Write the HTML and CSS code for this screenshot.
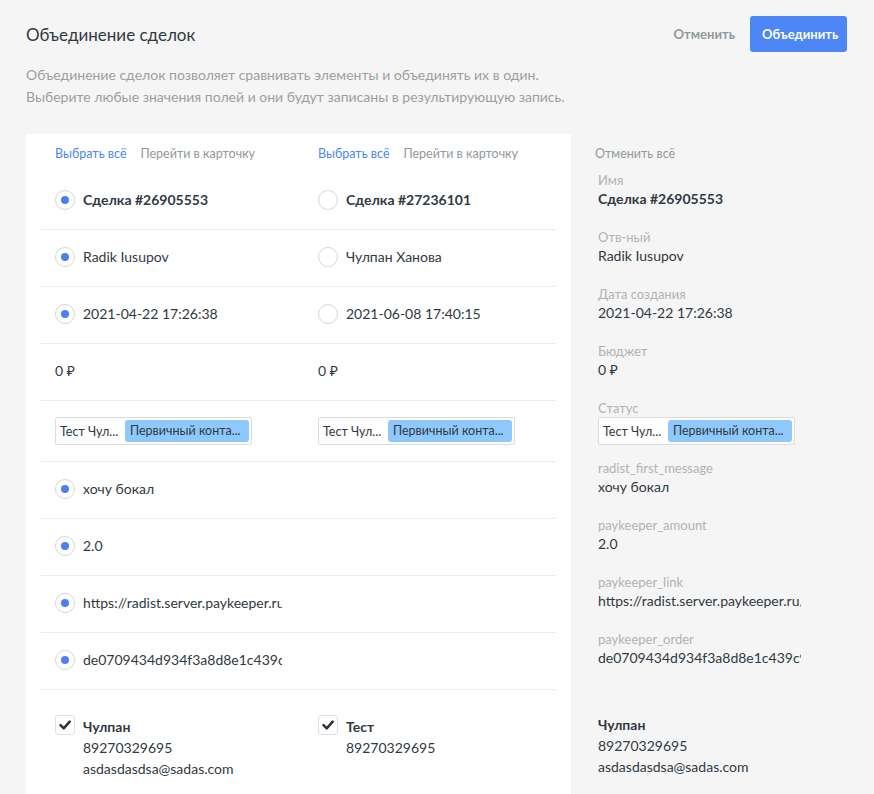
FILE: index.html
```html
<!DOCTYPE html>
<html lang="ru">
<head>
    <meta charset="UTF-8">
    <meta name="viewport" content="width=device-width, initial-scale=1.0">
    <title>Объединение сделок</title>
    <link rel="stylesheet" href="styles.css">
</head>
<body>

<div class="page">
    <header class="top">
        <h1 class="title">Объединение сделок</h1>
        <div class="actions">
            <button class="btn-cancel">Отменить</button>
            <button class="btn-merge">Объединить</button>
        </div>
    </header>

    <p class="intro">Объединение сделок позволяет сравнивать элементы и объединять их в один.<br>Выберите любые значения полей и они будут записаны в результирующую запись.</p>

    <div class="merge">
        <div class="compare">
            <div class="row links">
                <div class="cell"><a class="select-all">Выбрать всё</a><a class="open-card">Перейти в карточку</a></div>
                <div class="cell"><a class="select-all">Выбрать всё</a><a class="open-card">Перейти в карточку</a></div>
            </div>

            <div class="row">
                <div class="cell"><span class="radio on"></span><span class="val bold">Сделка #26905553</span></div>
                <div class="cell"><span class="radio"></span><span class="val bold">Сделка #27236101</span></div>
            </div>
            <div class="row">
                <div class="cell"><span class="radio on"></span><span class="val">Radik Iusupov</span></div>
                <div class="cell"><span class="radio"></span><span class="val">Чулпан Ханова</span></div>
            </div>
            <div class="row">
                <div class="cell"><span class="radio on"></span><span class="val">2021-04-22 17:26:38</span></div>
                <div class="cell"><span class="radio"></span><span class="val">2021-06-08 17:40:15</span></div>
            </div>
            <div class="row">
                <div class="cell"><span class="val">0 ₽</span></div>
                <div class="cell"><span class="val">0 ₽</span></div>
            </div>
            <div class="row row-status">
                <div class="cell">
                    <div class="status"><span class="pipeline">Тест Чул...</span><span class="stage">Первичный конта...</span></div>
                </div>
                <div class="cell">
                    <div class="status"><span class="pipeline">Тест Чул...</span><span class="stage">Первичный конта...</span></div>
                </div>
            </div>
            <div class="row">
                <div class="cell"><span class="radio on"></span><span class="val">хочу бокал</span></div>
                <div class="cell"></div>
            </div>
            <div class="row">
                <div class="cell"><span class="radio on"></span><span class="val">2.0</span></div>
                <div class="cell"></div>
            </div>
            <div class="row">
                <div class="cell"><span class="radio on"></span><span class="val">https://radist.server.paykeeper.ru/bill/1234567890/</span></div>
                <div class="cell"></div>
            </div>
            <div class="row">
                <div class="cell"><span class="radio on"></span><span class="val">de0709434d934f3a8d8e1c439c9a1b2e</span></div>
                <div class="cell"></div>
            </div>

            <div class="row contacts">
                <div class="cell">
                    <span class="check"><svg viewBox="0 0 20 20" width="20" height="20"><path d="M5 10.2 L8.6 13.8 L15.2 6.2" fill="none" stroke="#2b323b" stroke-width="2.8" stroke-linecap="round" stroke-linejoin="round"/></svg></span>
                    <div class="contact">
                        <div class="bold">Чулпан</div>
                        <div>89270329695</div>
                        <div>asdasdasdsa@sadas.com</div>
                    </div>
                </div>
                <div class="cell">
                    <span class="check"><svg viewBox="0 0 20 20" width="20" height="20"><path d="M5 10.2 L8.6 13.8 L15.2 6.2" fill="none" stroke="#2b323b" stroke-width="2.8" stroke-linecap="round" stroke-linejoin="round"/></svg></span>
                    <div class="contact">
                        <div class="bold">Тест</div>
                        <div>89270329695</div>
                    </div>
                </div>
            </div>
        </div>

        <aside class="result">
            <a class="reset">Отменить всё</a>
            <div class="field">
                <div class="label">Имя</div>
                <div class="value bold">Сделка #26905553</div>
            </div>
            <div class="field">
                <div class="label">Отв-ный</div>
                <div class="value">Radik Iusupov</div>
            </div>
            <div class="field">
                <div class="label">Дата создания</div>
                <div class="value">2021-04-22 17:26:38</div>
            </div>
            <div class="field">
                <div class="label">Бюджет</div>
                <div class="value">0 ₽</div>
            </div>
            <div class="field field-status">
                <div class="label">Статус</div>
                <div class="status"><span class="pipeline">Тест Чул...</span><span class="stage">Первичный конта...</span></div>
            </div>
            <div class="field">
                <div class="label">radist_first_message</div>
                <div class="value">хочу бокал</div>
            </div>
            <div class="field">
                <div class="label">paykeeper_amount</div>
                <div class="value">2.0</div>
            </div>
            <div class="field">
                <div class="label">paykeeper_link</div>
                <div class="value">https://radist.server.paykeeper.ru/bill/1234567890/</div>
            </div>
            <div class="field">
                <div class="label">paykeeper_order</div>
                <div class="value">de0709434d934f3a8d8e1c439c9a1b2e</div>
            </div>
            <div class="contact result-contact">
                <div class="bold">Чулпан</div>
                <div>89270329695</div>
                <div>asdasdasdsa@sadas.com</div>
            </div>
        </aside>
    </div>
</div>

</body>
</html>
```

FILE: styles.css
```css
body {
    margin: 0;
    background-color: #f5f5f5;
    font-family: "Lato", "Noto Sans", sans-serif;
    font-size: 14px;
    color: #313942;
}
.page {
    padding: 16px 27px 0 26px;
}
.bold {
    font-weight: bold;
}

/* header */
.top {
    display: flex;
    justify-content: space-between;
    align-items: center;
    height: 36px;
}
.title {
    margin: 0;
    font-size: 17px;
    font-weight: normal;
}
.actions {
    display: flex;
    align-items: center;
    gap: 8px;
}
.actions button {
    font-family: inherit;
    font-size: 13px;
    font-weight: bold;
    border: none;
    cursor: pointer;
}
.btn-cancel {
    background: none;
    color: #92989b;
    padding: 0 7px;
}
.btn-merge {
    background-color: #4c87f5;
    color: #fff;
    height: 36px;
    padding: 0 12px;
    border-radius: 3px;
    width: 97px;
}
.intro {
    margin: 12px 0 0;
    line-height: 22px;
    color: #9a9fa2;
}

/* main area */
.merge {
    display: flex;
    margin-top: 26px;
}
.compare {
    width: 545px;
    box-sizing: border-box;
    background-color: #fff;
    padding: 0 15px 40px;
}
.row {
    display: grid;
    grid-template-columns: 263px 1fr;
    height: 57px;
    box-sizing: border-box;
    padding: 0 0 2px 14px;
    border-bottom: 1px solid #ebebeb;
}
.row:nth-child(2) {
    height: 58px;
}
.row-status {
    height: 61px;
    padding-bottom: 0;
}
.cell {
    display: flex;
    align-items: center;
    gap: 8px;
    min-width: 0;
}
.links {
    height: 38px;
    padding-top: 10px;
    border-bottom: none;
}
.links .cell {
    align-items: flex-start;
    gap: 14px;
    font-size: 12.5px;
    line-height: 20px;
}
.select-all {
    color: #4c87f0;
    cursor: pointer;
}
.open-card {
    color: #92989b;
    cursor: pointer;
}
.radio {
    width: 20px;
    height: 20px;
    flex: none;
    box-sizing: border-box;
    border: 1px solid #d4d6d9;
    border-radius: 50%;
    display: flex;
    align-items: center;
    justify-content: center;
}
.radio.on::after {
    content: "";
    width: 8px;
    height: 8px;
    border-radius: 50%;
    background-color: #4c80f0;
}
.val {
    max-width: 199px;
    overflow: hidden;
    white-space: nowrap;
    line-height: 20px;
}

/* status chip */
.status {
    display: flex;
    align-items: center;
    width: 197px;
    height: 28px;
    box-sizing: border-box;
    border: 1px solid #dcdcdc;
    border-radius: 2px;
    background-color: #fff;
    padding: 0 2px 0 4px;
    font-size: 12.5px;
    white-space: nowrap;
}
.pipeline {
    width: 65px;
    flex: none;
    overflow: hidden;
}
.stage {
    flex: 1;
    height: 22px;
    line-height: 22px;
    background-color: #8ec8fc;
    border-radius: 3px;
    padding-left: 5px;
    overflow: hidden;
}

/* contacts */
.contacts {
    height: auto;
    border-bottom: none;
    padding: 25px 0 0 14px;
}
.contacts .cell {
    align-items: flex-start;
}
.check {
    width: 20px;
    height: 20px;
    flex: none;
    box-sizing: border-box;
    border: 1px solid #dedfe1;
    border-radius: 3px;
    display: flex;
    align-items: center;
    justify-content: center;
}
.check svg {
    width: 18px;
    height: 18px;
}
.contact {
    line-height: 21px;
    margin-top: 1px;
}

/* right column */
.result {
    padding: 10px 0 0 27px;
}
.reset {
    display: block;
    margin-left: -3px;
    font-size: 12.5px;
    line-height: 20px;
    color: #92989b;
    cursor: pointer;
}
.field {
    height: 57px;
}
.result .reset + .field {
    margin-top: 7px;
}
.field-status {
    height: 60px;
}
.label {
    font-size: 13px;
    line-height: 18px;
    color: #b0b3b5;
}
.value {
    width: 203px;
    overflow: hidden;
    white-space: nowrap;
    line-height: 20px;
}
.result-contact {
    margin-top: 27px;
}
```
